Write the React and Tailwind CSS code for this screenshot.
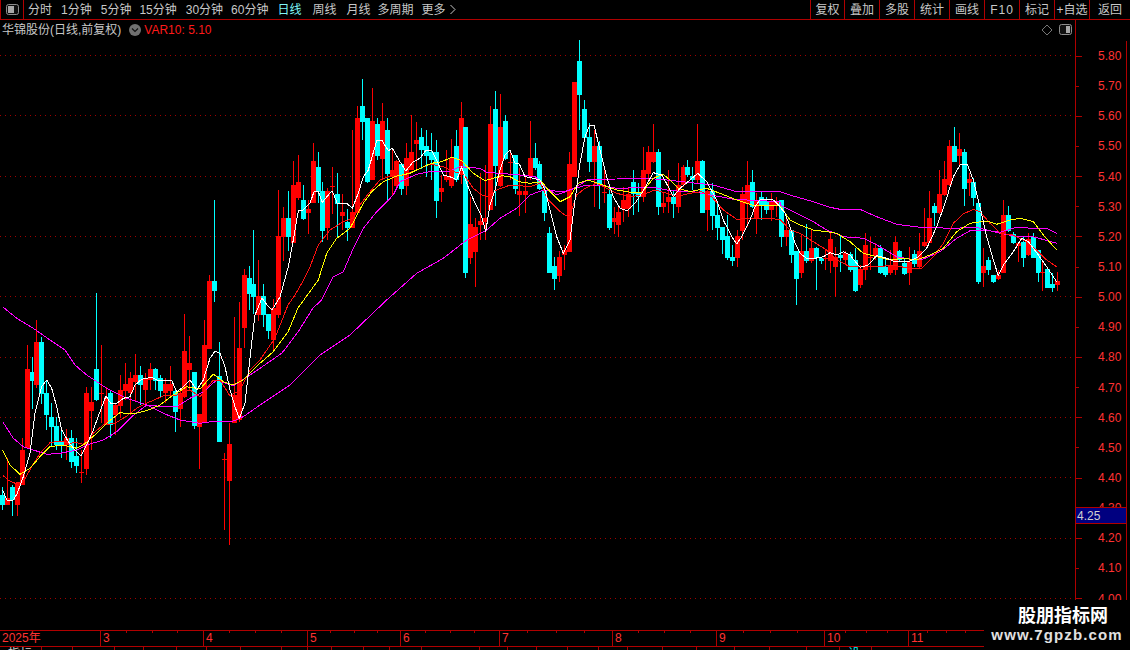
import React from "react";

const Z = (x0, y0, list) =>
  list.map(([zx, col, hi, top, bot, lo]) => ({
    x: x0 + zx / 3,
    col,
    hi: y0 + (hi ?? top) / 3,
    top: y0 + top / 3,
    bot: y0 + bot / 3,
    lo: y0 + (lo ?? bot) / 3,
  }));

const candles = [
  ...Z(0, 290, [
    [8, "c", 590, 615, 645, 660], [23, "r", 505, 625, 645, 645], [38, "c", 585, 590, 630, 678], [52, "r", 580, 580, 645, 680],
    [67, "r", 445, 480, 585, 585], [82, "r", 165, 237, 475, 475], [97, "c", 200, 247, 275, 355], [110, "r", 90, 155, 285, 295],
    [125, "c", 140, 155, 310, 340], [140, "c", 270, 310, 375, 420], [155, "c", 340, 380, 410, 470], [170, "c", 380, 408, 465, 480],
    [185, "c", 420, 452, 468, 505], [200, "r", 418, 445, 465, 510], [215, "c", 420, 445, 518, 535], [230, "c", 445, 498, 528, 550],
    [245, "r", 480, 545, 547, 580], [260, "r", 290, 310, 538, 555], [275, "r", 290, 337, 365, 480], [290, "c", 10, 237, 330, 335],
    [305, "r", 165, 310, 312, 400], [320, "r", 290, 320, 405, 405], [332, "c", 300, 310, 405, 445], [347, "r", 340, 345, 375, 435],
    [362, "r", 255, 300, 348, 385], [377, "r", 220, 282, 302, 330], [392, "r", 245, 265, 310, 375], [407, "r", 193, 255, 275, 335],
    [422, "c", 228, 255, 285, 345], [437, "r", 250, 265, 302, 345], [452, "r", 220, 237, 270, 300], [467, "c", 235, 238, 275, 300],
    [482, "c", 255, 265, 303, 320], [497, "r", 265, 282, 310, 340], [512, "r", 228, 282, 302, 320], [527, "c", 300, 302, 365, 425],
    [540, "r", 300, 310, 357, 410], [553, "r", 72, 183, 320, 325], [568, "r", 138, 220, 240, 300], [583, "c", 245, 247, 410, 415],
    [598, "r", 375, 372, 410, 537], [613, "r", 90, 165, 400, 400],
  ]),
  ...Z(0, 0, [
    [628, "r", 825, 843, 1047, 1047], [643, "c", 600, 843, 873, 906], [658, "c", 1026, 1128, 1326, 1326], [673, "r", 1359, 1377, 1380, 1590],
    [688, "r", 1269, 1332, 1443, 1635], [703, "r", 950, 1185, 1269, 1269], [718, "r", 906, 1044, 1260, 1265], [733, "r", 807, 825, 983, 1044],
    [748, "c", 798, 834, 882, 930], [760, "c", 690, 852, 891, 942], [774, "r", 780, 888, 945, 963], [789, "c", 852, 888, 945, 981],
    [804, "c", 942, 942, 993, 1017], [819, "r", 897, 924, 1020, 1050], [834, "r", 570, 708, 945, 954],
  ]),
  ...Z(260, 40, [
    [70, "r", 500, 533, 590, 663], [85, "c", 453, 533, 590, 632], [100, "r", 363, 435, 608, 610], [115, "r", 345, 426, 473, 480],
    [130, "c", 435, 480, 537, 540], [145, "r", 480, 507, 518, 582], [160, "r", 309, 363, 490, 490], [175, "c", 337, 381, 455, 490],
    [187, "c", 425, 453, 573, 605], [203, "r", 445, 453, 563, 600], [217, "r", 380, 437, 439, 520], [232, "c", 400, 462, 491, 595],
    [247, "r", 463, 516, 528, 570], [262, "c", 508, 545, 563, 605], [277, "r", 270, 516, 563, 565], [292, "r", 197, 234, 520, 520],
    [307, "c", 118, 197, 245, 300], [322, "c", 235, 235, 428, 430], [337, "r", 145, 243, 420, 420], [352, "c", 235, 252, 347, 362],
    [367, "r", 190, 243, 356, 420], [382, "c", 235, 270, 402, 480], [397, "r", 325, 390, 411, 470], [410, "r", 360, 362, 437, 450],
    [424, "c", 370, 371, 445, 465], [439, "r", 310, 355, 438, 465], [454, "r", 225, 336, 390, 390], [469, "r", 245, 300, 312, 385],
    [484, "c", 263, 291, 330, 385], [499, "c", 270, 318, 347, 410], [514, "c", 280, 335, 358, 420], [529, "c", 300, 336, 483, 533],
    [544, "r", 405, 444, 456, 485], [559, "r", 330, 408, 420, 425], [574, "r", 298, 355, 438, 445], [589, "c", 270, 318, 420, 425],
    [604, "r", 185, 234, 405, 430], [617, "c", 260, 261, 698, 713], [632, "r", 470, 552, 653, 670], [647, "r", 535, 561, 635, 743],
    [662, "r", 400, 543, 555, 600], [677, "r", 375, 534, 546, 600], [692, "r", 197, 252, 510, 510], [707, "c", 153, 207, 378, 497],
    [722, "r", 162, 261, 438, 440], [737, "c", 225, 243, 358, 360], [752, "r", 335, 365, 367, 420], [767, "c", 345, 345, 447, 462],
    [778, "r", 385, 453, 465, 528],
  ]),
  ...Z(520, 40, [
    [15, "r", 405, 453, 465, 520], [31, "r", 243, 353, 408, 420], [46, "c", 310, 353, 383, 390], [59, "c", 363, 372, 447, 450],
    [74, "c", 440, 453, 518, 543], [89, "c", 562, 578, 698, 700], [103, "c", 650, 678, 717, 748], [118, "r", 632, 651, 708, 725],
    [133, "r", 615, 630, 645, 690], [148, "r", 335, 372, 636, 636], [163, "r", 126, 126, 412, 412], [178, "c", 0, 63, 165, 270],
    [193, "c", 180, 207, 293, 295], [208, "c", 250, 291, 365, 398], [223, "r", 270, 318, 365, 500], [238, "c", 302, 318, 435, 506],
    [253, "r", 380, 455, 457, 487], [268, "c", 435, 461, 564, 570], [283, "r", 500, 534, 546, 582], [295, "r", 500, 516, 555, 590],
    [310, "r", 440, 479, 507, 545], [325, "r", 440, 462, 507, 530], [340, "c", 390, 426, 463, 525], [355, "c", 430, 456, 472, 518],
    [370, "r", 320, 390, 470, 485], [385, "r", 318, 336, 403, 420], [400, "r", 252, 336, 366, 370], [415, "c", 328, 336, 500, 525],
    [430, "r", 460, 488, 500, 520], [445, "r", 390, 470, 484, 520], [460, "c", 450, 472, 492, 533], [475, "r", 370, 435, 500, 520],
    [490, "r", 375, 380, 435, 440], [503, "c", 360, 380, 403, 410], [518, "c", 380, 408, 420, 450], [533, "r", 252, 363, 420, 430],
    [548, "c", 360, 363, 518, 518], [563, "r", 450, 453, 510, 572], [578, "c", 430, 453, 528, 570], [593, "c", 490, 525, 564, 600],
    [608, "c", 560, 562, 600, 640], [623, "c", 525, 588, 653, 660], [638, "c", 615, 651, 663, 678], [653, "r", 570, 588, 653, 680],
    [668, "r", 440, 462, 573, 600], [683, "r", 363, 435, 492, 560], [698, "c", 390, 426, 500, 505], [710, "r", 460, 480, 537, 582],
    [725, "c", 455, 472, 500, 540], [740, "c", 470, 484, 510, 520], [755, "r", 460, 486, 510, 545], [770, "r", 470, 487, 500, 530],
  ]),
  ...Z(780, 110, [
    [4, "c", 270, 270, 380, 412], [19, "r", 325, 360, 380, 410], [34, "c", 360, 360, 435, 458], [49, "c", 425, 423, 507, 584],
    [64, "r", 375, 423, 488, 505], [79, "c", 342, 424, 453, 458], [94, "r", 358, 414, 452, 460], [109, "c", 410, 414, 443, 540],
    [124, "c", 440, 445, 453, 460], [137, "r", 420, 445, 447, 480], [151, "r", 363, 387, 453, 488], [166, "r", 410, 441, 470, 560],
    [181, "c", 375, 435, 443, 485], [196, "r", 422, 430, 452, 460], [211, "c", 425, 433, 480, 485], [226, "c", 415, 450, 543, 548],
    [241, "r", 465, 478, 525, 533], [256, "r", 370, 405, 480, 510], [271, "r", 380, 440, 442, 480], [286, "r", 400, 414, 437, 450],
    [301, "c", 405, 414, 488, 492], [316, "c", 440, 472, 497, 500], [331, "r", 420, 468, 490, 495], [346, "r", 378, 396, 480, 495],
    [358, "c", 420, 423, 450, 455], [373, "c", 445, 458, 490, 495], [388, "r", 410, 456, 488, 525], [403, "c", 420, 432, 462, 470],
    [418, "r", 370, 423, 472, 475], [433, "r", 295, 395, 408, 412], [448, "r", 243, 323, 398, 400], [463, "c", 280, 288, 310, 350],
    [478, "r", 180, 252, 310, 312], [493, "r", 152, 207, 255, 258], [508, "r", 90, 108, 225, 228], [523, "c", 52, 108, 155, 158],
    [538, "r", 70, 117, 137, 165], [553, "c", 118, 126, 237, 288], [568, "r", 190, 207, 219, 260], [581, "c", 205, 216, 264, 288],
    [596, "c", 278, 278, 516, 522], [611, "r", 415, 468, 488, 533], [626, "c", 440, 450, 480, 495], [641, "c", 495, 495, 515, 518],
    [656, "r", 480, 495, 507, 510], [670, "r", 270, 315, 488, 490], [685, "c", 288, 315, 362, 365], [700, "c", 365, 372, 398, 402],
    [715, "r", 395, 398, 408, 455], [730, "c", 380, 396, 443, 470], [745, "r", 370, 388, 435, 438], [760, "c", 370, 380, 443, 446],
    [775, "c", 420, 420, 488, 515], [787, "r", 450, 486, 488, 543], [802, "c", 475, 477, 533, 536], [817, "c", 490, 522, 533, 548],
    [832, "r", 487, 513, 525, 545],
  ]),
];

const P = (x0, y0, flat) => {
  const out = [];
  for (let i = 0; i < flat.length; i += 2) out.push(`${(x0 + flat[i] / 3).toFixed(1)},${(y0 + flat[i + 1] / 3).toFixed(1)}`);
  return out.join(" ");
};

const white = [
  P(0, 290, [8,600,20,630,40,630,52,610,70,560,90,490,105,370,125,290,140,270,155,295,170,350,185,420,205,455,225,480,243,497,260,465,280,420,300,365,318,318,332,340,350,340,370,325,390,320,405,285,425,268,455,262,475,272,515,272,530,305,545,295,570,270,590,300,610,270,630,205,645,183,660,190,675,230,690,300,705,350,718,385,735,340]),
  "252,340 255,315 262,298 267,305 272,310 280,297",
  P(260, 40, [85,680,100,600,115,513,130,510,150,490,162,455,175,455,187,487,205,465,217,453,232,490,260,490,277,505,295,460,310,410,325,390,350,302,365,300,385,332,397,325,420,365,437,393,460,365,480,355,497,332,515,332,532,365,550,405,570,410,590,420,605,380,620,430,645,490,665,530,677,575,690,495,705,450,720,390,735,345,750,330,765,370,778,372]),
  P(520, 40, [15,410,40,415,60,420,75,450,90,510,110,590,130,640,150,600,165,480,180,370,195,290,208,258,222,255,240,330,260,410,280,470,300,505,322,512,345,490,365,460,385,425,400,398,425,405,445,440,460,470,480,445,510,420,533,400,560,425,590,480,610,540,635,590,650,612,665,590,690,540,705,500,720,480,740,478,760,480]),
  P(780, 110, [0,290,15,310,30,350,45,400,60,430,80,445,105,445,130,440,150,428,170,435,190,425,210,435,240,472,265,465,290,437,320,445,345,455,385,455,415,440,440,415,470,350,495,280,520,200,540,165,562,163,580,210,600,290,620,380,640,450,655,497,670,465,700,425,725,385,745,395,775,435,800,470,830,515]),
].join(" ");

const red = [
  P(0, 290, [8,556,25,570,45,580,70,575,95,530,120,490,150,458,180,453,205,460,230,458,250,463,280,430,310,405,345,400,380,378,410,355,450,335,490,318,530,315,570,300,600,320,640,270,660,270,690,318,720,300,750,240,780,210]),
  "275,338 288,305 295,295",
  P(260, 40, [125,730,150,680,175,615,210,570,250,545,280,535,300,495,330,455,360,420,390,408,430,405,470,390,510,372,550,380,580,395,610,400,640,445,665,465,680,470,710,450,745,437,778,437]),
  P(520, 40, [30,440,60,430,85,480,115,510,135,525,150,525,170,465,195,445,230,430,260,445,290,460,330,470,365,465,405,450,440,460,470,470,510,460,545,455,575,470,610,510,650,538,690,535,730,535]),
  P(780, 110, [0,328,30,360,60,370,100,395,140,420,170,450,210,470,250,470,300,470,340,465,385,475,425,475,460,440,490,400,520,340,550,312,580,298,600,305,630,340,660,370,700,375,740,395,775,425,800,450,830,470]),
].join(" ");

const yellow = [
  P(0, 290, [8,480,30,525,60,553,90,535,120,500,150,470,190,465,230,475,250,465,290,430,325,395,360,368,400,372,440,362,480,345,520,315,560,290,600,297,640,252,670,275,700,285,730,270,780,220]),
  "273,352 288,332 298,308",
  P(260, 40, [175,720,200,640,230,595,270,565,310,490,335,455,370,425,410,408,450,400,490,380,515,370,545,365,575,352,605,362,640,400,675,422,700,415,725,407,750,410,778,425]),
  P(520, 40, [30,430,65,425,85,450,120,485,150,470,175,430,205,420,240,432,290,450,340,458,365,458,400,415,430,403,450,420,475,445,510,455,560,445,600,460,650,480,695,495,780,497]),
  P(780, 110, [30,330,60,345,100,360,140,365,170,370,210,395,250,430,290,440,330,450,370,445,410,450,450,435,490,415,530,365,570,340,620,333,650,343,690,330,720,325,760,335,790,375,830,420]),
].join(" ");

const magentaFast = [
  P(0, 290, [8,395,40,445,70,470,100,480,140,493,180,490,230,480,260,465,310,450,350,425,395,380,440,345,490,350,530,350,570,325,610,305,650,270,700,287,735,265,780,235]),
  "282,353 298,332 313,308",
  P(260, 40, [185,780,220,710,250,695,280,625,310,565,350,515,400,465,420,425,470,403,520,393,570,393,600,380,660,385,680,397,780,405]),
  P(520, 40, [45,410,75,440,110,465,150,450,170,440,205,418,290,417,380,415,440,420,530,430,580,435,650,455,780,455]),
  P(780, 110, [40,258,100,275,150,292,180,298,240,298,290,320,350,343,420,352,520,355,590,352,640,365,700,378,760,380,830,400]),
].join(" ");

const magentaSlow = [
  P(0, 290, [8,50,50,85,100,115,150,150,195,180,225,225,260,255,320,295,380,325,440,345,490,370,540,390,600,400,650,393,695,395,730,380,780,345]),
  "290,385 320,355 350,335",
  P(260, 40, [380,780,470,700,550,655,620,600,680,570,720,535,770,505]),
  P(520, 40, [0,495,30,465,70,450,130,455,200,435,240,435,290,445,400,442,450,452,520,455,600,470,640,478,780,485]),
  P(780, 110, [0,285,50,310,100,335,140,360,190,380,250,385,300,410,350,440,390,447,430,447,480,425,530,385,570,362,610,360,660,367,710,352,760,355,800,355,830,370]),
].join(" ");

const gridYs = [55, 115, 176, 236, 296, 357, 417, 477, 538, 598];

function Chart() {
  return (
    <svg width="1075" height="591" viewBox="0 39 1075 591" className="block">
      {gridYs.map((y) => (
        <line key={y} x1="0" x2="1075" y1={y + 0.5} y2={y + 0.5} stroke="#a00000" strokeWidth="1" strokeDasharray="1 4" />
      ))}
      <g shapeRendering="crispEdges">
        {candles.map((c, i) => {
          const left = Math.round(c.x - 2.5);
          const fill = c.col === "r" ? "#ff0000" : "#00ffff";
          return (
            <g key={i} fill={fill}>
              <rect x={left + 2} y={Math.round(c.hi)} width="1" height={Math.max(1, Math.round(c.lo - c.hi))} />
              <rect x={left} y={Math.round(c.top)} width="5" height={Math.max(1, Math.round(c.bot - c.top))} />
            </g>
          );
        })}
      </g>
      <g fill="none" strokeWidth="1" shapeRendering="crispEdges" strokeLinejoin="round">
        <polyline points={magentaSlow} stroke="#ff00ff" />
        <polyline points={magentaFast} stroke="#ff00ff" />
        <polyline points={red} stroke="#ff1010" />
        <polyline points={yellow} stroke="#ffff00" />
        <polyline points={white} stroke="#ffffff" />
      </g>
    </svg>
  );
}

function ToggleIcon({ flip }) {
  return (
    <svg width="13" height="11" viewBox="0 0 13 11" className="block">
      <rect x="0.5" y="0.5" width="12" height="10" rx="2" fill="#101010" stroke="#8c8c8c" />
      <rect x={flip ? 7 : 2} y="2" width={flip ? 4 : 6} height="7" fill="#a8a8a8" />
    </svg>
  );
}

const periods = [
  ["分时", 9], ["1分钟", 9], ["5分钟", 8], ["15分钟", 9], ["30分钟", 8], ["60分钟", 9],
  ["日线", 11], ["周线", 10], ["月线", 7], ["多周期", 8], ["更多", 3],
];
const gapClass = { 3: "mr-[3px]", 7: "mr-[7px]", 8: "mr-[8px]", 9: "mr-[9px]", 10: "mr-[10px]", 11: "mr-[11px]" };
const tools = [
  ["复权", "w-[34px]"], ["叠加", "w-[35px]"], ["多股", "w-[35px]"], ["统计", "w-[35px]"], ["画线", "w-[35px]"],
  ["F10", "w-[35px] tracking-[1px]"], ["标记", "w-[35px]"], ["+自选", "w-[35px]"], ["返回", "w-[41px]"],
];
const prices = ["5.80","5.70","5.60","5.50","5.40","5.30","5.20","5.10","5.00","4.90","4.80","4.70","4.60","4.50","4.40","4.30","4.20","4.10","4.00"];
const months = [
  ["2025年", "w-[100px]"], ["3", "w-[103px]"], ["4", "w-[104px]"], ["5", "w-[93px]"], ["6", "w-[99px]"],
  ["7", "w-[113px]"], ["8", "w-[104px]"], ["9", "w-[108px]"], ["10", "w-[84px]"], ["11", "w-[76px]"],
];
const tabs = [
  [42, "指标", "text-[#d0d0d0]"], [31, "+", "text-[#d0d0d0]"], [42], [29], [33], [30], [34], [41], [26], [24], [32], [26], [32], [58], [28], [29], [31], [31], [29], [35], [34], [38], [35], [37], [33, "", ""], [32, "设置", "text-[#00ffff]"],
];

export default function App() {
  return (
    <div
      className="relative flex h-[650px] w-[1130px] flex-col overflow-hidden bg-black text-[12px] text-[#c8c8c8]"
      style={{ fontFamily: '"Liberation Sans", "Noto Sans CJK SC", sans-serif' }}
    >
      <header className="flex h-[20px] shrink-0 items-stretch border-b border-[#b00000]">
        <div className="flex w-[24px] items-center justify-center border-x border-[#b00000]">
          <ToggleIcon />
        </div>
        <nav className="ml-[4px] flex items-center leading-none">
          {periods.map(([t, g]) => (
            <span key={t} className={`${gapClass[g]} ${t === "日线" ? "text-[#7ff6f6]" : ""}`}>{t}</span>
          ))}
          <svg width="8" height="11" viewBox="0 0 8 11" className="mt-[-1px]">
            <path d="M1.5 1 L6 5.5 L1.5 10" fill="none" stroke="#c8c8c8" strokeWidth="1" />
          </svg>
        </nav>
        <div className="ml-auto flex">
          {tools.map(([t, w]) => (
            <button key={t} className={`${w} flex items-center justify-center whitespace-nowrap border-l border-[#b00000] leading-none`}>{t}</button>
          ))}
        </div>
      </header>

      <main className="flex h-[610px] shrink-0">
        <section className="flex w-[1075px] shrink-0 flex-col">
          <div className="flex h-[19px] shrink-0 items-center pl-[2px]">
            <span className="whitespace-nowrap">华锦股份(日线,前复权)</span>
            <span className="ml-[8px] flex h-[12px] w-[12px] items-center justify-center rounded-full bg-[#707070]">
              <svg width="8" height="6" viewBox="0 0 8 6"><path d="M1 1.5 L4 4.5 L7 1.5" fill="none" stroke="#111" strokeWidth="1.2" /></svg>
            </span>
            <span className="ml-[3px] text-[#ff1a1a]">VAR10: 5.10</span>
            <span className="ml-auto flex items-center gap-[6px] pr-[3px]">
              <svg width="12" height="12" viewBox="0 0 12 12"><path d="M6 1 L11 6 L6 11 L1 6 Z" fill="none" stroke="#777" /></svg>
              <ToggleIcon flip />
            </span>
          </div>
          <Chart />
        </section>
        <aside className="flex w-[55px] shrink-0 flex-col border-l border-[#b00000] pt-[21px]">
          <div className="flex w-[51px] flex-1 flex-col border-r border-[#b00000]">
            {prices.map((p, i) => (
              <div key={p} className="flex h-[30.15px] shrink-0 items-center">
                <span className={`h-px bg-[#b00000] ${i % 2 === 0 ? "w-[6px]" : "w-[3px]"}`} />
                <span className={`text-[#ff3232] ${i % 2 === 0 ? "ml-[16px]" : "ml-[19px]"}`}>{p}</span>
              </div>
            ))}
          </div>
        </aside>
      </main>

      <div className="flex h-[17px] shrink-0 border-y border-[#b00000]">
        {months.map(([t, w], i) => (
          <div key={t} className={`${w} relative flex shrink-0 justify-evenly ${i > 0 ? "border-l border-[#b00000]" : ""}`}>
            <span className="absolute left-[2px] top-0 text-[12px] leading-[15px] text-[#ff3232]">{t}</span>
            {i > 0 && [0, 1, 2].map((k) => <span key={k} className="h-[2px] w-px bg-[#b00000]" />)}
          </div>
        ))}
      </div>

      <div className="flex h-[3px] shrink-0 overflow-hidden">
        {tabs.map(([w, t, c], i) => (
          <div key={i} style={{ width: `${w}px` }} className={`shrink-0 overflow-hidden border-r border-[#b00000] pl-[8px] leading-[15px] ${c || ""}`}>{t}</div>
        ))}
      </div>

      <div className="absolute left-[1076px] top-[507px] flex h-[17px] w-[50px] items-center border-y border-[#b00000] bg-[#000080] pl-[1px] text-[#d0d0d0]">4.25</div>

      <div className="absolute bottom-0 right-0 flex h-[50px] w-[146px] flex-col items-center bg-black pt-[3px] font-bold text-[#e0e0e0]">
        <span className="pl-[12px] text-[18px] leading-[22px] text-white" style={{ fontFamily: '"Noto Sans CJK SC", sans-serif' }}>股朋指标网</span>
        <span className="mt-[1px] text-[15px] leading-[18px] tracking-[1.1px]">www.7gpzb.com</span>
      </div>
    </div>
  );
}
